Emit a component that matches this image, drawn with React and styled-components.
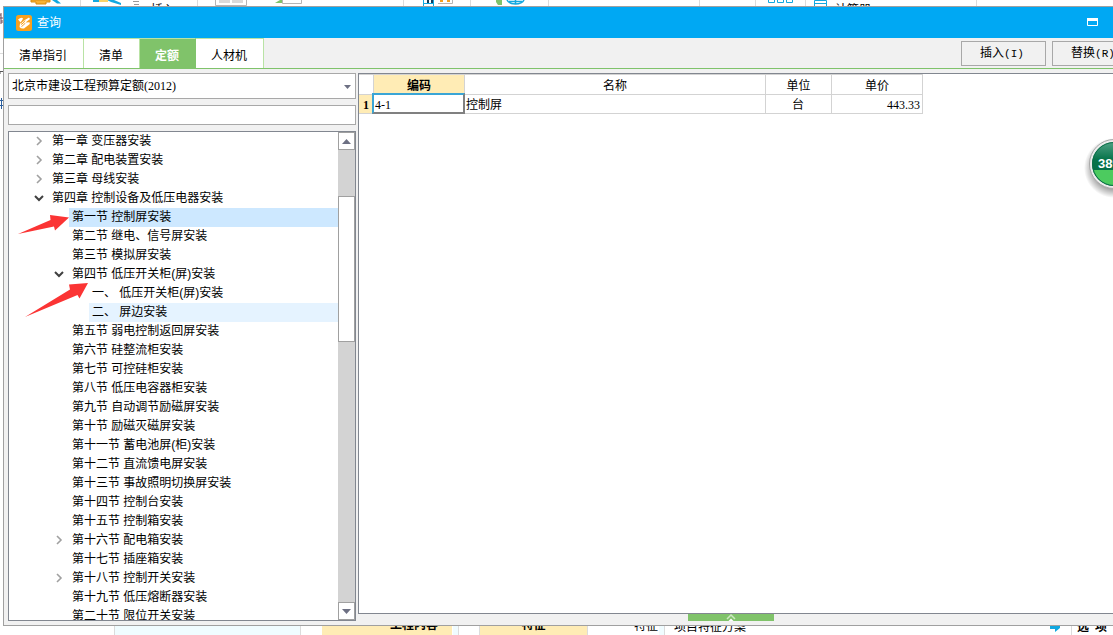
import React from "react";
import styled, { createGlobalStyle } from "styled-components";

const SANS = `"Liberation Sans", "Noto Sans CJK SC", sans-serif`;
const SONG = `"Liberation Serif", "Noto Sans CJK SC", serif`;

const Global = createGlobalStyle`
  *, *::before, *::after { box-sizing: border-box; }
  body { margin: 0; background: #fff; color: #000; font: 12px/18px ${SANS}; overflow: hidden; }
  button, input, select { font: inherit; color: inherit; margin: 0; border-radius: 0; }
  ul { list-style: none; margin: 0; padding: 0; }
`;

const Screen = styled.div`
  position: relative;
  display: flex;
  flex-direction: column;
  height: 100vh;
  overflow: hidden;
  background: #fff;
`;

const Ribbon = styled.div`
  display: flex;
  flex: none;
  height: 6px;
  overflow: hidden;
`;

const RibbonGroup = styled.div`
  display: flex;
  flex: none;
  width: ${(p) => p.$w}px;
  padding-left: ${(p) => p.$pad || 0}px;
  gap: ${(p) => p.$gap || 0}px;
  border-right: 1px solid #dcdcdc;
  svg { flex: none; display: block; }
`;

const RibbonText = styled.span`
  flex: none;
  padding-top: 2px;
  line-height: 16px;
  white-space: nowrap;
`;

const Middle = styled.div`
  display: flex;
  flex: 1;
  min-height: 0;
`;

const Sliver = styled.svg`
  flex: none;
  width: 3px;
  height: 120px;
`;

const Dialog = styled.section`
  display: flex;
  flex-direction: column;
  flex: 1;
  min-width: 0;
  background: #f1f1f1;
  border: 1px solid #a0a0a0;
  border-right: 0;
`;

const TitleBar = styled.header`
  display: flex;
  flex: none;
  align-items: center;
  gap: 5px;
  height: 31px;
  padding: 0 14px 0 12px;
  background: #00a8f3;
  color: #fff;
`;

const Title = styled.h1`
  flex: 1;
  margin: 0;
  font-size: 12px;
  font-weight: 400;
`;

const IconButton = styled.button`
  display: flex;
  padding: 0;
  border: 0;
  background: transparent;
`;

const Toolbar = styled.div`
  display: flex;
  flex: none;
  height: 31px;
  overflow: hidden;
  border-bottom: 1px solid #7fc36b;
  font-family: ${SONG};
`;

const Tab = styled.button`
  flex: none;
  padding: 4px 16px 0 15px;
  border: 0;
  border-top: 1px solid #b9e3a5;
  border-right: 1px solid ${(p) => (p.$active ? "#7fc36b" : "#b9e3a5")};
  background: ${(p) => (p.$active ? "#80c36a" : "#fff")};
  color: ${(p) => (p.$active ? "#fff" : "#000")};
  font-weight: ${(p) => (p.$active ? 700 : 400)};
`;

const Actions = styled.div`
  display: flex;
  gap: 6px;
  margin: 3px -24px 2px auto;
`;

const ActionButton = styled.button`
  width: 85px;
  padding: 0 3px 0 0;
  border: 1px solid #a8a8a8;
  background: #f1f1f1;
`;

const Mnemonic = styled.span`
  font-family: "Liberation Mono", monospace;
  font-size: 11px;
`;

const Body = styled.div`
  display: flex;
  flex: 1;
  gap: 2px;
  min-height: 0;
  padding: 4px 0 0 4px;
`;

const Side = styled.aside`
  display: flex;
  flex: none;
  flex-direction: column;
  gap: 6px;
  width: 348px;
  padding-bottom: 4px;
`;

const Picker = styled.div`
  position: relative;
  flex: none;
  svg { position: absolute; right: 5px; top: 12px; pointer-events: none; }
`;

const Select = styled.select`
  display: block;
  appearance: none;
  width: 100%;
  height: 26px;
  padding: 0 20px 0 3px;
  border: 1px solid #a8a8a8;
  background: #fff;
  font-family: ${SONG};
`;

const Search = styled.input`
  flex: none;
  width: 100%;
  height: 20px;
  padding: 0 3px;
  border: 1px solid #a8a8a8;
  background: #fff;
`;

const TreeBox = styled.div`
  position: relative;
  display: flex;
  flex: 1;
  min-height: 0;
  overflow: hidden;
  border: 1px solid #828790;
  background: #fff;
`;

const Tree = styled.ul`
  flex: 1;
  min-width: 0;
`;

const TreeRow = styled.li`
  display: flex;
  height: 19px;
  padding-left: ${(p) => p.$level * 20}px;
`;

const Toggle = styled.button`
  display: flex;
  align-items: center;
  justify-content: center;
  width: 20px;
  padding: 0 1px 1px 0;
  border: 0;
  background: transparent;
`;

const Label = styled.span`
  flex: 1;
  margin-left: ${(p) => (p.$leaf ? 20 : 0)}px;
  padding-left: 3px;
  background: ${(p) => ({ selected: "#cde8ff", hover: "#e5f3ff" })[p.$state] || "transparent"};
  line-height: 19px;
  white-space: pre;
`;

const Scrollbar = styled.div`
  display: flex;
  flex: none;
  flex-direction: column;
  width: 17px;
  background: #d3d3d3;
`;

const ScrollButton = styled.button`
  display: flex;
  flex: none;
  align-items: center;
  justify-content: center;
  height: 18px;
  padding: 0;
  border: 1px solid #a0a0a0;
  background: #fff;
`;

const Track = styled.div`
  flex: 1;
  padding-top: 46px;
`;

const Thumb = styled.div`
  height: 146px;
  border: 1px solid #a0a0a0;
  background: #fff;
`;

const Marks = styled.svg`
  position: absolute;
  left: 0;
  top: 0;
  pointer-events: none;
`;

const Main = styled.main`
  display: flex;
  flex: 1;
  flex-direction: column;
  min-width: 0;
`;

const Grid = styled.div`
  flex: 1;
  min-height: 0;
  border: 1px solid #828790;
  border-right: 0;
  background: #fff;
`;

const Table = styled.table`
  width: 564px;
  border-spacing: 0;
  border-top: 1px solid #d3d3d3;
  table-layout: fixed;
  font-family: ${SONG};
  line-height: 16px;
`;

const cell = `
  padding: 2px 0 0;
  border-right: 1px solid #d3d3d3;
  border-bottom: 1px solid #d3d3d3;
`;

const Head = styled.th`
  ${cell}
  height: ${(p) => (p.scope === "row" ? 19 : 20)}px;
  background: ${(p) => (p.$current ? "#ffecb5" : "#fff")};
  font-weight: ${(p) => (p.$current ? 700 : 400)};
`;

const Cell = styled.td`
  ${cell}
  position: relative;
  height: 19px;
  padding: 2px 2px 0 1px;
  text-align: ${(p) => p.$align || "left"};
`;

const CellFocus = styled.span`
  position: absolute;
  inset: -2px -1px -1px -2px;
  border: 2px solid #808080;
  border-top-color: #3aa5d5;
  border-left-color: #3aa5d5;
`;

const Footer = styled.div`
  display: flex;
  flex: none;
  justify-content: center;
  height: 11px;
  padding-right: 9px;
`;

const Handle = styled.button`
  display: flex;
  justify-content: center;
  width: 86px;
  height: 7px;
  padding: 0;
  border: 0;
  background: #80c36a;
`;

const Under = styled.div`
  display: flex;
  flex: none;
  height: 9px;
  overflow: hidden;
  font-family: ${SONG};
`;

const UnderCell = styled.div`
  display: flex;
  flex: none;
  align-items: flex-end;
  justify-content: ${(p) => p.$align || "center"};
  width: ${(p) => p.$w}px;
  padding-right: ${(p) => p.$end || 0}px;
  padding-bottom: ${(p) => p.$drop || 3}px;
  border-right: 1px solid ${(p) => (p.$line ? "#dcdcdc" : "transparent")};
  background: ${(p) => p.$bg || "#fff"};
  background-clip: padding-box;
  font-weight: ${(p) => (p.$bold ? 700 : 400)};
  line-height: 12px;
  white-space: pre;
`;

const Ball = styled.svg`
  position: absolute;
  right: -26px;
  top: 132px;
`;

const Logo = () => (
  <svg width="16" height="16" viewBox="0 0 16 16">
    <rect width="16" height="16" rx="2.500" fill="#f7a01d" />
    <path d="M2 4.500Q5 2 7 3.200 6.500 5.500 4.500 7.500 3.500 6 2 4.500Z" fill="#fff" />
    <path d="M4 8.500Q6 8 8 5.500L13 2.500 14 4 9.500 7.500 13.500 7.200 13.800 9 8 13.500Q5 14 3.500 12Z" fill="#fff" />
    <path d="M5.500 11.500Q8 10 9 8.200M9 5.500Q7.500 8.500 5 9.500" fill="none" stroke="#f7a01d" />
  </svg>
);

const Chevron = ({ open }) => (
  <svg width="10" height="10" viewBox="0 0 10 10" fill="none" strokeWidth={open ? 2 : 1.6}>
    {open ? <path d="M1 3 5 7 9 3" stroke="#404040" /> : <path d="M3 1 7 5 3 9" stroke="#a0a0a0" />}
  </svg>
);

const Triangle = ({ up }) => (
  <svg width="9" height="5" viewBox="0 0 9 5">
    <path d={up ? "M0 5 4.5 0 9 5Z" : "M0 0H9L4.5 5Z"} fill="#6d7083" />
  </svg>
);

const TABS = ["清单指引", "清单", "定额", "人材机"];

const NODES = [
  [1, "第一章 变压器安装", "closed"],
  [1, "第二章 配电装置安装", "closed"],
  [1, "第三章 母线安装", "closed"],
  [1, "第四章 控制设备及低压电器安装", "open"],
  [2, "第一节 控制屏安装", "", "selected"],
  [2, "第二节 继电、信号屏安装"],
  [2, "第三节 模拟屏安装"],
  [2, "第四节 低压开关柜(屏)安装", "open"],
  [3, "一、 低压开关柜(屏)安装"],
  [3, "二、 屏边安装", "", "hover"],
  [2, "第五节 弱电控制返回屏安装"],
  [2, "第六节 硅整流柜安装"],
  [2, "第七节 可控硅柜安装"],
  [2, "第八节 低压电容器柜安装"],
  [2, "第九节 自动调节励磁屏安装"],
  [2, "第十节 励磁灭磁屏安装"],
  [2, "第十一节 蓄电池屏(柜)安装"],
  [2, "第十二节 直流馈电屏安装"],
  [2, "第十三节 事故照明切换屏安装"],
  [2, "第十四节 控制台安装"],
  [2, "第十五节 控制箱安装"],
  [2, "第十六节 配电箱安装", "closed"],
  [2, "第十七节 插座箱安装"],
  [2, "第十八节 控制开关安装", "closed"],
  [2, "第十九节 低压熔断器安装"],
  [2, "第二十节 限位开关安装"],
];

function BackRibbon() {
  return (
    <Ribbon>
      <RibbonGroup $w={81} $pad={30}>
        <svg width="34" height="6">
          <path d="M1 0H20V2H16V4H6V2H1Z" fill="#f9b233" stroke="#d98c10" />
          <path d="M22 0H27L31 3.500H27Z" fill="#12a8e0" />
        </svg>
      </RibbonGroup>
      <RibbonGroup $w={117} $pad={12} $gap={10}>
        <svg width="30" height="6">
          <path d="M0 0H7V2H0ZM14 0H21L28 3V5L18 2Z" fill="#12a8e0" />
          <path d="M6 0H15V2H6Z" fill="#f7d36a" />
        </svg>
        <svg width="8" height="6">
          <path d="M0 1.5H6M1 4.5H6" stroke="#999" />
        </svg>
        <RibbonText>插入</RibbonText>
      </RibbonGroup>
      <RibbonGroup $w={206} $pad={17} $gap={27}>
        <svg width="32" height="6">
          <path d="M.5 0V5.5H31.5V0" fill="none" stroke="#b5b5b5" />
          <path d="M4 0H15V3H4ZM17 0H28V3H17Z" fill="#dadada" />
        </svg>
        <svg width="30" height="6">
          <path d="M1 3 6 0H8V3Z" fill="#80c36a" />
          <path d="M8.500 0V3.500H27.500V0" fill="none" stroke="#b5b5b5" />
        </svg>
      </RibbonGroup>
      <RibbonGroup $w={67} $pad={19} $gap={4}>
        <svg width="11" height="6">
          <path d="M.5 0V6M10.500 0V6M0 3.500H11" stroke="#12a8e0" />
          <path d="M4 0H6V3H4ZM8 0H10V3H8Z" fill="#123c5c" />
        </svg>
        <svg width="15" height="6">
          <path d="M0 3.500H14.500V0" fill="none" stroke="#b5b5b5" />
          <path d="M2 0H5V2H2ZM9 0H12V2H9Z" fill="#f7a01d" />
        </svg>
      </RibbonGroup>
      <RibbonGroup $w={78} $pad={25} $gap={3}>
        <svg width="7" height="6">
          <path d="M0 0H6V5H2L0 2Z" fill="#80c36a" />
        </svg>
        <svg width="20" height="6">
          <path d="M1 0Q3 4 9.500 4T18 0M9.500 0V4M3 1.500H16" fill="none" stroke="#12a8e0" strokeWidth="1.500" />
        </svg>
      </RibbonGroup>
      <RibbonGroup $w={151} />
      <RibbonGroup $w={56} />
      <RibbonGroup $w={50} $pad={12}>
        <svg width="26" height="6">
          <path d="M.5 0V2.500H6.500V0M9.500 0V2.500H15.500V0M18.500 0V2.500H24.500V0" fill="none" stroke="#12a8e0" />
        </svg>
      </RibbonGroup>
      <RibbonGroup $w={171} $pad={8} $gap={8}>
        <svg width="13" height="6">
          <path d="M.5 6V.5H12.500V6M0 3.500H13" fill="none" stroke="#12a8e0" />
        </svg>
        <RibbonText>计算器</RibbonText>
      </RibbonGroup>
    </Ribbon>
  );
}

function QuotaTree() {
  return (
    <TreeBox>
      <Tree role="tree">
        {NODES.map(([level, text, toggle, state]) => (
          <TreeRow key={text} $level={level} role="treeitem" aria-selected={state === "selected"}>
            {toggle && (
              <Toggle aria-label={text}>
                <Chevron open={toggle === "open"} />
              </Toggle>
            )}
            <Label $leaf={!toggle} $state={state}>{text}</Label>
          </TreeRow>
        ))}
      </Tree>
      <Scrollbar>
        <ScrollButton aria-label="向上"><Triangle up /></ScrollButton>
        <Track><Thumb /></Track>
        <ScrollButton aria-label="向下"><Triangle /></ScrollButton>
      </Scrollbar>
      <Marks width="90" height="190" fill="#fb3434">
        <path d="M9 102 41.500 88 41 83 60 85.500 46 98.500 45 94.500Z" />
        <path d="M16 185 61 157.500 60 152.500 79 151 70.500 166.500 68.500 163Z" />
      </Marks>
    </TreeBox>
  );
}

function QuotaTable() {
  return (
    <Table>
      <colgroup>
        <col style={{ width: 15 }} />
        <col style={{ width: 91 }} />
        <col style={{ width: 301 }} />
        <col style={{ width: 66 }} />
        <col style={{ width: 91 }} />
      </colgroup>
      <thead>
        <tr>
          <Head />
          <Head scope="col" $current>编码</Head>
          <Head scope="col">名称</Head>
          <Head scope="col">单位</Head>
          <Head scope="col">单价</Head>
        </tr>
      </thead>
      <tbody>
        <tr>
          <Head scope="row" $current>1</Head>
          <Cell>4-1<CellFocus /></Cell>
          <Cell>控制屏</Cell>
          <Cell $align="center">台</Cell>
          <Cell $align="right">443.33</Cell>
        </tr>
      </tbody>
    </Table>
  );
}

export default function App() {
  return (
    <Screen>
      <Global />
      <BackRibbon />
      <Middle>
        <Sliver viewBox="0 0 3 120">
          <path d="M0 9H1M0 12H3M1 7V18M2 14V17" stroke="#6b4a5a" />
          <path d="M0 47.500H3" stroke="#dcdcdc" />
          <path d="M0 65.500H3M0 67H1" stroke="#555" />
          <path d="M0 94.500H3M0 99.500H3M1.500 92V103" stroke="#2a5d9c" />
        </Sliver>
        <Dialog>
          <TitleBar>
            <Logo />
            <Title>查询</Title>
            <IconButton aria-label="还原">
              <svg width="12" height="9">
                <path d="M.5 1V7.500H10.500V1M0 1.500H11" fill="none" stroke="#fff" />
                <path d="M0 0H11V3H0Z" fill="#fff" />
              </svg>
            </IconButton>
          </TitleBar>
          <Toolbar>
            {TABS.map((t) => (
              <Tab key={t} $active={t === "定额"}>{t}</Tab>
            ))}
            <Actions>
              <ActionButton>插入<Mnemonic>(I)</Mnemonic></ActionButton>
              <ActionButton>替换<Mnemonic>(R)</Mnemonic></ActionButton>
            </Actions>
          </Toolbar>
          <Body>
            <Side>
              <Picker>
                <Select aria-label="定额库">
                  <option>北京市建设工程预算定额(2012)</option>
                </Select>
                <svg width="7" height="4"><path d="M0 0H7L3.500 4Z" fill="#6d7083" /></svg>
              </Picker>
              <Search aria-label="搜索" />
              <QuotaTree />
            </Side>
            <Main>
              <Grid><QuotaTable /></Grid>
              <Footer>
                <Handle aria-label="展开">
                  <svg width="10" height="7" fill="none" strokeWidth="1.500">
                    <path d="M1 5 5 1 9 5" stroke="#cde8c2" />
                    <path d="M2.500 7 5 4.500 7.500 7Z" fill="#fff" />
                  </svg>
                </Handle>
              </Footer>
            </Main>
          </Body>
        </Dialog>
      </Middle>
      <Under>
        <UnderCell $w={115} $line />
        <UnderCell $w={186} $line $bg="#f0fcff" />
        <UnderCell $w={21} />
        <UnderCell $w={131} $bg="#ffecb5" $bold $align="flex-end" $end={14} $drop={4}>工程内容</UnderCell>
        <UnderCell $w={6} $line $bg="#f0fcff" />
        <UnderCell $w={21} $line />
        <UnderCell $w={108} $line $bg="#ffecb5" $bold $drop={4}>特征</UnderCell>
        <UnderCell $w={71} $align="flex-end">特征</UnderCell>
        <UnderCell $w={6} $line $bg="#f0fcff" />
        <UnderCell $w={82} $align="flex-end" $drop={2}>项目特征方案</UnderCell>
        <UnderCell $w={325} $line $align="flex-end" $drop={3}>
          <svg width="21" height="6">
            <path d="M0 0H10V2L5 6V3H0Z" fill="#12a8e0" />
          </svg>
        </UnderCell>
        <UnderCell $w={41} $bold $drop={2}>{"选  项"}</UnderCell>
      </Under>
      <Ball width="60" height="72" viewBox="0 0 60 72">
        <defs>
          <radialGradient id="ballShadow">
            <stop offset="0.7" stopColor="#000" stopOpacity="0.35" />
            <stop offset="1" stopColor="#000" stopOpacity="0" />
          </radialGradient>
          <linearGradient id="ballTop" x2="0" y2="1">
            <stop offset="0" stopColor="#4fa184" />
            <stop offset="0.4" stopColor="#06734a" />
            <stop offset="1" stopColor="#046b43" />
          </linearGradient>
        </defs>
        <circle cx="35" cy="36" r="30" fill="url(#ballShadow)" />
        <circle cx="35" cy="32" r="24.500" fill="#ececec" stroke="#a8a8a8" />
        <circle cx="35" cy="32" r="22" fill="url(#ballTop)" />
        <path d="M14 38H56A22 22 0 0 1 14 38Z" fill="#4ccb5f" />
        <circle cx="35" cy="32" r="21.500" fill="none" stroke="#0b6e48" />
        <text x="19" y="36" fill="#fff" fontFamily="Liberation Sans, sans-serif" fontSize="13" fontWeight="700">38%</text>
      </Ball>
    </Screen>
  );
}
